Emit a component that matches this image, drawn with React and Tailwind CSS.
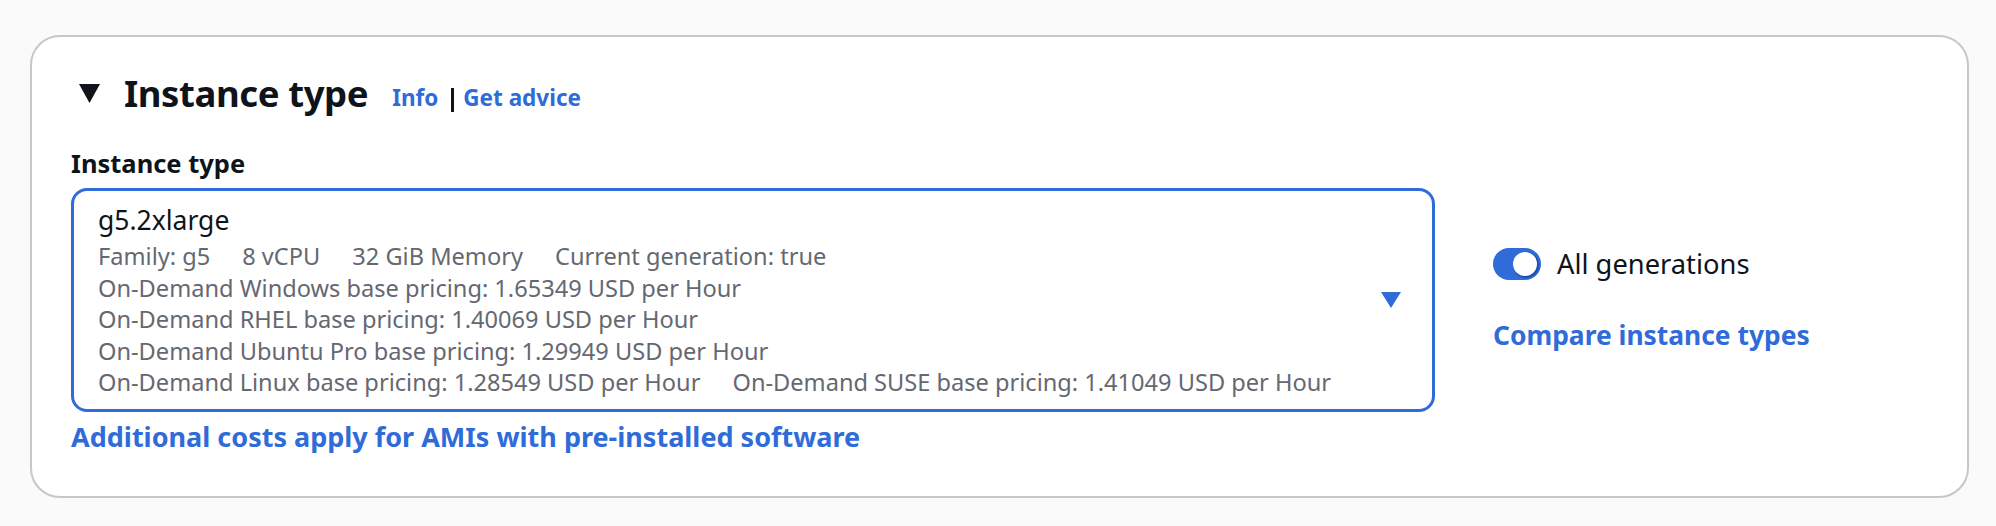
import React from "react";

const font = { fontFamily: '"Noto Sans", "Open Sans", sans-serif' };

function Toggle() {
  return (
    <span className="relative inline-flex h-[32px] w-[48px] shrink-0 items-center rounded-full bg-[#2f6bd9]">
      <span className="absolute right-[4px] top-[4px] h-[24px] w-[24px] rounded-full bg-white shadow-[1px_1px_0_1px_#1f4fae]" />
    </span>
  );
}

export default function App() {
  return (
    <div
      className="min-h-[526px] w-[1996px] bg-[#fafafa] pl-[30px] pt-[35px]"
      style={font}
    >
      <div className="h-[463px] w-[1939px] rounded-[30px] border-2 border-[#c6c6cd] bg-white pl-[39px] pt-[32px]">
        {/* Header */}
        <div className="flex h-[48px] items-center">
          <svg
            className="ml-[8px] mr-[24px] shrink-0"
            width="21"
            height="19"
            viewBox="0 0 21 19"
          >
            <polygon points="0,0 21,0 10.5,19" fill="#0f141a" />
          </svg>
          <h2 className="text-[36.5px] font-bold leading-[48px] tracking-[-0.4px] text-[#0f141a]">
            Instance type
          </h2>
          <span className="ml-[24px] mt-[13px] flex items-center self-start text-[22.5px] font-bold leading-[32px] text-[#2f6bd9]">
            <span>Info</span>
            <span className="ml-[13px] mr-[9px] mt-[3px] inline-block h-[24px] w-[3px] bg-[#0f141a]" />
            <span>Get advice</span>
          </span>
        </div>

        {/* Label */}
        <div className="mt-[30px] text-[25.5px] font-bold leading-[32px] text-[#0f141a]">
          Instance type
        </div>

        {/* Row: select + right column */}
        <div className="mt-[9px] flex items-start">
          <div className="flex h-[224px] w-[1364px] items-center justify-between rounded-[16px] border-[3px] border-[#2f6bd9] pl-[24px] pr-[31px]">
            <div className="flex h-full flex-col pt-[13px]">
              <div className="text-[26.5px] leading-[32px] text-[#0f141a]">
                g5.2xlarge
              </div>
              <div className="mt-[5px] text-[23.6px] leading-[31.5px] text-[#656871]">
                <div className="flex gap-x-[32px]">
                  <span>Family: g5</span>
                  <span>8 vCPU</span>
                  <span>32 GiB Memory</span>
                  <span>Current generation: true</span>
                </div>
                <div>On-Demand Windows base pricing: 1.65349 USD per Hour</div>
                <div>On-Demand RHEL base pricing: 1.40069 USD per Hour</div>
                <div>On-Demand Ubuntu Pro base pricing: 1.29949 USD per Hour</div>
                <div className="flex gap-x-[32px]">
                  <span>On-Demand Linux base pricing: 1.28549 USD per Hour</span>
                  <span>On-Demand SUSE base pricing: 1.41049 USD per Hour</span>
                </div>
              </div>
            </div>
            <svg width="20" height="16" viewBox="0 0 20 16" className="shrink-0">
              <polygon points="0,0 20,0 10,16" fill="#2f6bd9" />
            </svg>
          </div>

          <div className="ml-[58px] mt-[60px] flex flex-col">
            <div className="flex h-[32px] items-center gap-[16px]">
              <Toggle />
              <span className="text-[27.3px] leading-[32px] text-[#0f141a]">
                All generations
              </span>
            </div>
            <div className="mt-[37px] text-[26.4px] font-bold leading-[36px] text-[#2f6bd9]">
              Compare instance types
            </div>
          </div>
        </div>

        {/* Bottom link */}
        <div className="mt-[7px] text-[27px] font-bold leading-[36px] text-[#2f6bd9]">
          Additional costs apply for AMIs with pre-installed software
        </div>
      </div>
    </div>
  );
}
